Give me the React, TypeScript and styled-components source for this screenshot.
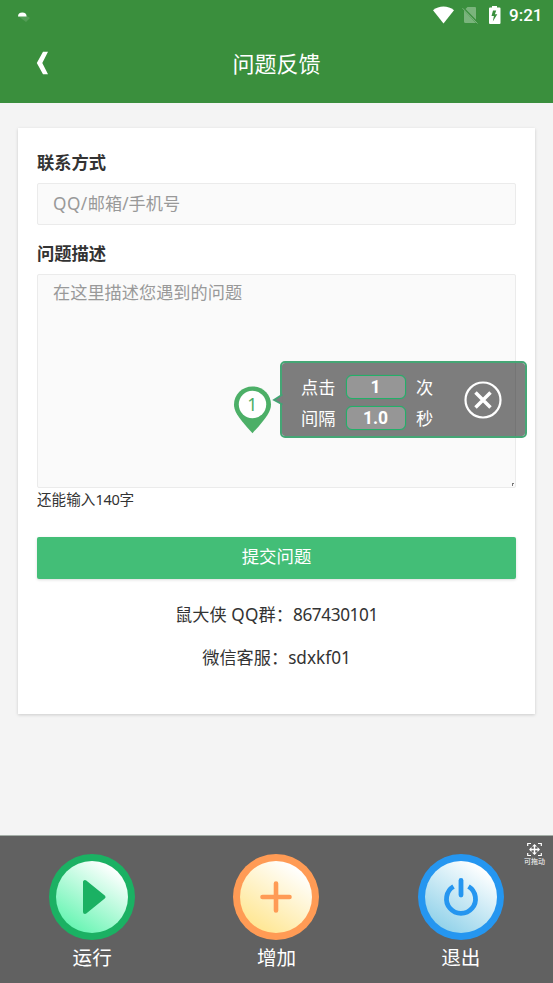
import React from "react";
import styled, { createGlobalStyle } from "styled-components";

const GlobalStyle = createGlobalStyle`
  * { box-sizing: border-box; }
  html, body, #root { height: 100%; }
  body {
    margin: 0;
    background: #f4f4f4;
    color: #333;
    font-family: "Noto Sans", "Noto Sans CJK SC", sans-serif;
    overflow: hidden;
  }
`;

const Screen = styled.div`
  position: relative;
  display: flex;
  flex-direction: column;
  width: 553px;
  height: 983px;
  overflow: hidden;
`;

const Header = styled.header`
  flex: none;
  height: 103px;
  background: #3a8f3d;
  color: #fff;
`;

const StatusBar = styled.div`
  display: flex;
  align-items: center;
  justify-content: space-between;
  height: 30px;
  padding: 0 9px 0 17px;
`;

const StatusIcons = styled.div`
  display: flex;
  align-items: center;
  gap: 8px;
`;

const Clock = styled.span`
  width: 35px;
  font: 500 17px/30px Roboto, sans-serif;
  white-space: nowrap;
`;

const TitleBar = styled.div`
  display: grid;
  grid-template-columns: 80px 1fr 80px;
  align-items: center;
  height: 66px;
`;

const BackButton = styled.button`
  display: flex;
  padding: 0 0 0 36px;
  border: 0;
  background: none;
`;

const Title = styled.h1`
  margin: 0;
  font-size: 22px;
  font-weight: 400;
  line-height: 30px;
  text-align: center;
`;

const Card = styled.main`
  display: flex;
  flex-direction: column;
  flex: none;
  height: 586px;
  margin: 24.5px 18.5px 0 18px;
  padding: 22.5px 18.5px 0 19px;
  background: #fff;
  box-shadow: 0 1px 3px rgba(0, 0, 0, 0.17);
`;

const FieldGroup = styled.div`
  display: flex;
  flex-direction: column;
  gap: 7px;

  & + & {
    margin-top: 16px;
  }
`;

const Label = styled.label`
  height: 26px;
  font-size: 17.3px;
  font-weight: 700;
  line-height: 26px;
`;

const Field = styled.div<{ $height: number; $padTop: number }>`
  position: relative;
  flex: none;
  height: ${(p) => p.$height}px;
  padding: ${(p) => p.$padTop}px 15px 0;
  border: 1px solid #ebebeb;
  border-radius: 2px;
  background: #fafafa;
  color: #999;
  font-size: 17.2px;
  line-height: 28px;
`;

const Tracked = styled.span<{ $by: number }>`
  letter-spacing: ${(p) => p.$by}px;
`;

const ResizeMark = styled.svg`
  position: absolute;
  right: 1px;
  bottom: 1px;
`;

const Counter = styled.div`
  height: 24px;
  font-size: 14.6px;
  line-height: 22px;
`;

const SubmitButton = styled.button`
  flex: none;
  height: 42px;
  margin-top: 25px;
  padding: 0 0 5px;
  border: 0;
  border-radius: 2px;
  background: #43be77;
  box-shadow: 0 1px 3px rgba(0, 0, 0, 0.14);
  color: #fff;
  font: inherit;
  font-size: 17.4px;
`;

const ContactList = styled.div`
  margin-top: 13.5px;
`;

const Contact = styled.p`
  height: 43px;
  margin: 0;
  font-size: 17.2px;
  line-height: 43px;
  text-align: center;
`;

const Pin = styled.svg`
  position: absolute;
  left: 233px;
  top: 386px;
`;

const Popup = styled.section`
  position: absolute;
  left: 280px;
  top: 361px;
  display: flex;
  align-items: center;
  width: 247px;
  height: 77px;
  border: 2px solid #45a675;
  border-radius: 5px;
  background: rgba(0, 0, 0, 0.5);
  background-clip: padding-box;
  padding: 0 0 0 19px;
  color: #fff;
`;

const PopupTail = styled.svg`
  position: absolute;
  left: -10px;
  top: 30px;
`;

const Settings = styled.div`
  display: grid;
  grid-template-columns: 34px 60px 20px;
  grid-auto-rows: 25px;
  row-gap: 6px;
  column-gap: 10.5px;
  padding-top: 7px;
  font-size: 17.2px;
  line-height: 26px;
  white-space: nowrap;
`;

const ValueBox = styled.div`
  height: 24px;
  border: 1px solid #23b069;
  border-radius: 6px;
  background: #969696;
  box-shadow: 0 0 1px #23b069;
  font: 700 17.5px/23px Roboto, sans-serif;
  text-align: center;
`;

const CloseButton = styled.button`
  display: flex;
  margin-left: 28px;
  padding: 0;
  border: 0;
  background: none;
`;

const BottomBar = styled.nav`
  position: relative;
  display: grid;
  grid-template-columns: repeat(3, 1fr);
  flex: none;
  height: 148px;
  margin-top: auto;
  padding-top: 18px;
  border-top: 1px solid #a5afa8;
  background: #616161;
`;

const Action = styled.button`
  display: flex;
  flex-direction: column;
  align-items: center;
  padding: 0;
  border: 0;
  background: none;
  color: #fff;
  font: inherit;
  font-size: 19.6px;
  line-height: 36px;
`;

const DragHandle = styled.div`
  position: absolute;
  right: 4px;
  top: 6px;
  display: flex;
  flex-direction: column;
  align-items: center;
  width: 29px;
  color: #fff;
  font-size: 7px;
  line-height: 9px;
  white-space: nowrap;
`;

type RoundIconProps = {
  id: string;
  ring: string;
  from: string;
  to: string;
  children: React.ReactNode;
};

function RoundIcon({ id, ring, from, to, children }: RoundIconProps) {
  return (
    <svg width="86" height="86" viewBox="0 0 86 86">
      <defs>
        <linearGradient id={id} x1="0.25" y1="0.93" x2="0.8" y2="0.1">
          <stop offset="0" stopColor={from} />
          <stop offset="1" stopColor={to} />
        </linearGradient>
      </defs>
      <circle cx="43" cy="43" r="43" fill={ring} />
      <circle cx="43" cy="43" r="36" fill={`url(#${id})`} />
      {children}
    </svg>
  );
}

export default function App() {
  return (
    <Screen>
      <GlobalStyle />
      <Header>
        <StatusBar>
          <svg width="13" height="14" viewBox="0 0 13 14">
            <path d="M1 8h9l3 2-4 4z" fill="#fff" opacity="0.13" />
            <path d="M1 8.5C1 6 2.5 4.5 5.3 4.5S9.6 6 9.6 8.5z" fill="#fff" />
          </svg>
          <StatusIcons>
            <svg width="21" height="18" viewBox="0 0 21 18">
              <path d="M0 4.2C6-.7 15-.7 21 4.2L10.5 17.5z" fill="#fff" />
            </svg>
            <svg width="17" height="18" viewBox="0 0 17 18">
              <path d="M5.5 1H13a1 1 0 0 1 1 1v11.7L3.5 3zM2 4.500L14 17H3.500A1.500 1.500 0 0 1 2 15.500z" fill="#fff" opacity="0.33" />
              <path d="M.5 2.200L15.500 17.500" stroke="#fff" strokeWidth="1" opacity="0.33" />
            </svg>
            <svg width="14" height="20" viewBox="0 0 14 20">
              <path d="M3 2.500h2V1h5v1.500h2.500a1 1 0 0 1 1 1V18a1 1 0 0 1-1 1H3a1 1 0 0 1-1-1V3.500a1 1 0 0 1 1-1z" fill="#fff" />
              <path d="M9.200 5.500H6L4.500 11h2.400L5.800 16.500l4.500-7.300H7.900z" fill="#3a8f3d" />
            </svg>
            <Clock>9:21</Clock>
          </StatusIcons>
        </StatusBar>
        <TitleBar>
          <BackButton aria-label="返回">
            <svg width="13" height="24" viewBox="0 0 13 24">
              <path d="M7 .8h5L6.300 12 12 23.200H7L.8 12z" fill="#fff" />
            </svg>
          </BackButton>
          <Title>问题反馈</Title>
        </TitleBar>
      </Header>

      <Card>
        <FieldGroup>
          <Label>联系方式</Label>
          <Field $height={42} $padTop={6}>
            <Tracked $by={0.5}>QQ/</Tracked>邮箱/手机号
          </Field>
        </FieldGroup>
        <FieldGroup>
          <Label>问题描述</Label>
          <Field $height={214} $padTop={4.4}>
            在这里描述您遇到的问题
            <ResizeMark width="3" height="3" viewBox="0 0 3 3">
              <path d="M1 0h2v1H2v2H1z" fill="#777" />
            </ResizeMark>
          </Field>
        </FieldGroup>
        <Counter>
          还能输入<Tracked $by={-0.35}>140</Tracked>字
        </Counter>
        <SubmitButton>提交问题</SubmitButton>
        <ContactList>
          <Contact>
            鼠大侠 <Tracked $by={0.3}>QQ</Tracked>群：<Tracked $by={-0.4}>867430101</Tracked>
          </Contact>
          <Contact>微信客服：sdxkf01</Contact>
        </ContactList>
      </Card>

      <BottomBar>
        <Action>
          <RoundIcon id="run" ring="#1bb163" from="#6af5b4" to="#ffffff">
            <path d="M36 28v30L54.500 43z" fill="#1bb163" stroke="#1bb163" strokeWidth="4" strokeLinejoin="round" />
          </RoundIcon>
          运行
        </Action>
        <Action>
          <RoundIcon id="add" ring="#ff9b55" from="#ffe795" to="#ffffff">
            <path d="M43 29.500v27M29.500 43h27" stroke="#ff9b55" strokeWidth="4.600" strokeLinecap="round" />
          </RoundIcon>
          增加
        </Action>
        <Action>
          <RoundIcon id="exit" ring="#2596f0" from="#94d3ea" to="#ffffff">
            <path d="M35.500 32.500a14.500 14.500 0 1 0 15 0" fill="none" stroke="#2596f0" strokeWidth="4.800" />
            <path d="M43 26.500v14.500" stroke="#2596f0" strokeWidth="4.800" strokeLinecap="round" />
          </RoundIcon>
          退出
        </Action>
        <DragHandle>
          <svg width="15" height="15" viewBox="0 0 15 15">
            <path d="M.7 4V1.500H4M11 1.500h3.300V4M.7 11v2.500H4M11 13.500h3.300V11" fill="none" stroke="#fff" strokeWidth="1.200" />
            <path d="M7.500 4v7M4 7.500h7" stroke="#fff" strokeWidth="1.400" />
            <path d="M7.500 2L10 4.500H5zM7.500 13L5 10.500h5zM2 7.500L4.500 5v5zM13 7.500L10.500 10V5z" fill="#fff" />
          </svg>
          可拖动
        </DragHandle>
      </BottomBar>

      <Pin width="39" height="48" viewBox="0 0 39 48">
        <path d="M19.500.5C9 .5 1 8.500 1 18.500c0 7 4.500 13.500 18.500 28.700C33.500 32 38 25.500 38 18.500 38 8.500 30 .5 19.500.5z" fill="#4caf67" />
        <circle cx="19.500" cy="18.500" r="13.700" fill="#fff" />
        <text x="19.200" y="25" textAnchor="middle" fontFamily="Noto Sans" fontSize="17.500" fill="#4caf67">1</text>
      </Pin>
      <Popup>
        <PopupTail width="11" height="14" viewBox="0 0 11 14">
          <path d="M10.500 1.500L2 7l8.500 4.500" fill="#7d7d7d" stroke="#42a574" strokeWidth="1.800" />
        </PopupTail>
        <Settings>
          <span>点击</span>
          <ValueBox>1</ValueBox>
          <span>次</span>
          <span>间隔</span>
          <ValueBox>1.0</ValueBox>
          <span>秒</span>
        </Settings>
        <CloseButton aria-label="关闭">
          <svg width="38" height="38" viewBox="0 0 38 38">
            <circle cx="19" cy="19" r="17.500" fill="none" stroke="#fff" strokeWidth="2.200" />
            <path d="M11.500 11.500l15 15m0-15l-15 15" stroke="#fff" strokeWidth="3.500" />
          </svg>
        </CloseButton>
      </Popup>
    </Screen>
  );
}
